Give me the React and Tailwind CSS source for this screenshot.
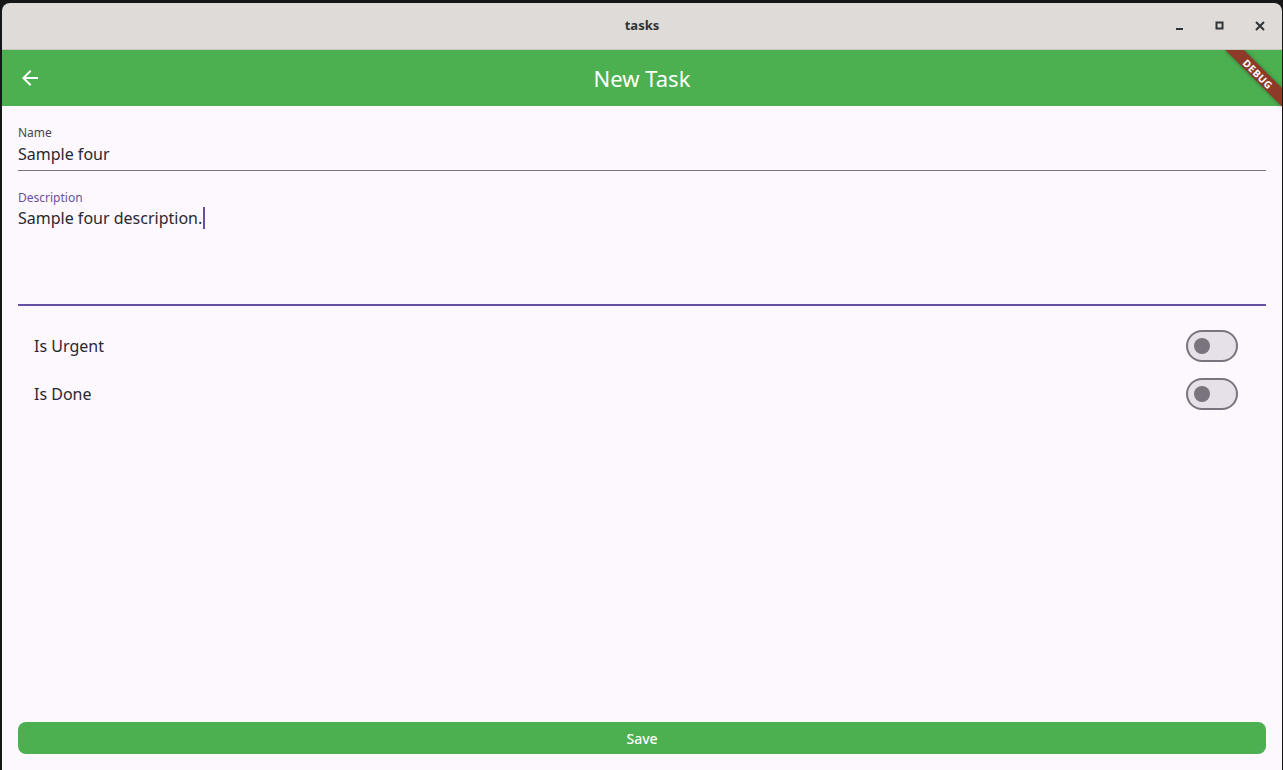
const FONT = { fontFamily: '"Noto Sans", "Open Sans", sans-serif' };

function ArrowBack() {
  return (
    <svg width="24" height="24" viewBox="0 0 24 24" fill="white">
      <path d="M20 11H7.83l5.59-5.59L12 4l-8 8 8 8 1.41-1.41L7.83 13H20v-2z" />
    </svg>
  );
}

function WindowControls() {
  return (
    <div className="flex items-center gap-[24px] pr-[14px]">
      <svg width="16" height="16" viewBox="0 0 16 16">
        <rect x="4" y="10" width="7" height="2" fill="#2e3436" />
      </svg>
      <svg width="16" height="16" viewBox="0 0 16 16">
        <rect x="4.5" y="4.5" width="6" height="6" fill="none" stroke="#2e3436" strokeWidth="2" />
      </svg>
      <svg width="16" height="16" viewBox="0 0 16 16">
        <path d="M4 4l8 8M12 4l-8 8" stroke="#2e3436" strokeWidth="2" />
      </svg>
    </div>
  );
}

function Toggle() {
  return (
    <div className="w-[52px] h-[32px] rounded-full border-2 border-[#79747e] bg-[#e6e0e9] flex items-center pl-[6px]">
      <div className="w-[16px] h-[16px] rounded-full bg-[#79747e]" />
    </div>
  );
}

function SwitchRow({ label }) {
  return (
    <div className="h-[48px] flex items-center justify-between pl-[16px] pr-[28px]">
      <span className="text-[16px] text-[#2b2830]">{label}</span>
      <Toggle />
    </div>
  );
}

export default function App() {
  return (
    <div className="w-[1283px] h-[770px] bg-[#161616] pt-[3px] pl-[2px] pr-[1px] overflow-hidden" style={FONT}>
      <div className="h-full flex flex-col rounded-t-[8px] overflow-hidden">
        {/* title bar */}
        <div className="h-[47px] shrink-0 bg-[#dedbd8] border-b border-[#c9c5c1] flex items-center relative">
          <span className="absolute left-0 right-0 text-center text-[13px] font-bold text-[#2e3436]">tasks</span>
          <div className="ml-auto">
            <WindowControls />
          </div>
        </div>

        <div className="flex-1 flex flex-col bg-[#fdf7fe] relative overflow-hidden">
          {/* app bar */}
          <div className="h-[56px] shrink-0 bg-[#4caf50] flex items-center relative">
            <div className="pl-[16px]">
              <ArrowBack />
            </div>
            <span className="absolute left-0 right-0 text-center text-[22px] text-white">New Task</span>
          </div>

          {/* debug banner */}
          <div className="absolute right-0 top-0 w-0 h-0">
            <div className="absolute left-[-40px] top-[27px] w-[80px] h-[13px] origin-[40px_-27px] rotate-45 bg-[#8d3a29] shadow-[0_0_4px_rgba(0,0,0,0.4)] flex items-center justify-center">
              <span className="text-[10px] leading-none font-bold text-white tracking-[0.5px]">DEBUG</span>
            </div>
          </div>

          <div className="flex-1 flex flex-col px-[16px]">
            {/* name */}
            <div className="mt-[19px] border-b border-[#79747e] pb-[4px]">
              <div className="h-[16px] text-[12px] leading-[16px] text-[#49454f]">Name</div>
              <div className="mt-[1px] h-[24px] text-[16px] leading-[24px] text-[#2b2830]">Sample four</div>
            </div>

            {/* description */}
            <div className="mt-[19px] border-b-2 border-[#6750a4] h-[116px]">
              <div className="h-[16px] text-[12px] leading-[16px] text-[#6750a4]">Description</div>
              <div className="h-[24px] text-[16px] leading-[24px] text-[#2b2830] flex items-center">
                <span>Sample four description.</span>
                <span className="ml-[1px] w-[2px] h-[22px] bg-[#6750a4]" />
              </div>
            </div>

            {/* switches */}
            <div className="mt-[16px]">
              <SwitchRow label="Is Urgent" />
              <SwitchRow label="Is Done" />
            </div>

            <div className="flex-1" />

            <button className="mb-[16px] h-[32px] w-full rounded-[8px] bg-[#4caf50] text-white text-[14px] font-medium">
              Save
            </button>
          </div>
        </div>
      </div>
    </div>
  );
}
